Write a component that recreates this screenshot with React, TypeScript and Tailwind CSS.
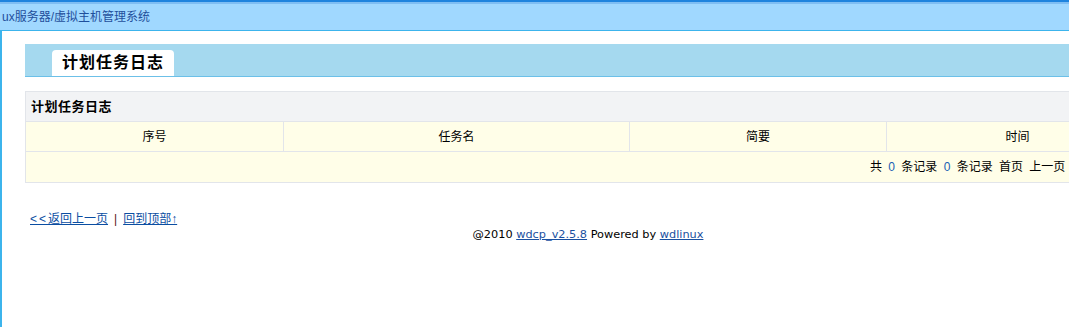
import React from 'react';

const cjk = { fontFamily: '"Liberation Sans", "Noto Sans CJK SC", sans-serif' };

const columns = [
  { title: '序号', w: 'w-[258px]' },
  { title: '任务名', w: 'w-[346px]' },
  { title: '简要', w: 'w-[257px]' },
  { title: '时间', w: 'flex-1' },
];

export default function App() {
  return (
    <div className="w-[1069px] h-[327px] overflow-hidden bg-white text-black" style={cjk}>
      <div className="w-[1174px]">
        {/* top bar */}
        <div className="border-t-2 border-[#1f84de]">
          <div className="h-[2px] bg-[#7fbef3]" />
          <div className="h-[27px] bg-[#a0d8ff] border-b border-[#3cb4ec] flex items-center pl-[2px] text-[12px] text-[#1f4f9c]">
            ux服务器/虚拟主机管理系统
          </div>
        </div>

        <div className="border-l-2 border-[#3cb4ec] h-[300px] pl-[23px] pr-[25px] pt-[13px]">
          {/* tab bar */}
          <div className="h-[33px] bg-[#a5d9ef] border-b border-[#6cc0e8] flex items-end pl-[27px]">
            <div className="h-[26px] px-[10px] bg-white rounded-t-[4px] flex items-center text-[16px] font-bold tracking-[1px]">
              计划任务日志
            </div>
          </div>

          {/* table */}
          <div className="mt-[14px] border border-[#e2e5ea] text-[12px]">
            <div className="h-[30px] bg-[#f2f3f5] flex items-center pl-[5px] text-[13px] font-bold tracking-[0.5px] border-b border-[#e2e5ea]">
              计划任务日志
            </div>
            <div className="h-[30px] flex bg-[#fffee8] border-b border-[#e2e5ea]">
              {columns.map((c, i) => (
                <div
                  key={c.title}
                  className={`${c.w} flex items-center justify-center ${i < columns.length - 1 ? 'border-r border-[#e2e5ea]' : ''}`}
                >
                  {c.title}
                </div>
              ))}
            </div>
            <div className="h-[30px] bg-[#fffee8] flex items-center justify-end pr-[10px] whitespace-pre [word-spacing:3px]">
              共 <span className="text-[#1a5fb4]">0</span> 条记录 <span className="text-[#1a5fb4]">0</span> 条记录 首页 上一页 下一页 尾页
            </div>
          </div>

          {/* links */}
          <div className="mt-[29px] pl-[5px] text-[12px] leading-[15px] text-[#0b4ea2]">
            <a href="#" className="underline">
              <span className="tracking-[2px]">&lt;&lt;</span>返回上一页
            </a>
            <span className="text-[#5a1020] mx-[6px]">|</span>
            <a href="#" className="underline">回到顶部↑</a>
          </div>
          <div className="text-center leading-[15px] -ml-[23px] -mr-[25px]" style={{ fontFamily: '"DejaVu Sans", sans-serif', fontSize: '11.3px' }}>
            @2010 <a href="#" className="underline text-[#1a50a0]">wdcp_v2.5.8</a> Powered by{' '}
            <a href="#" className="underline text-[#1a50a0]">wdlinux</a>
          </div>
        </div>
      </div>
    </div>
  );
}
